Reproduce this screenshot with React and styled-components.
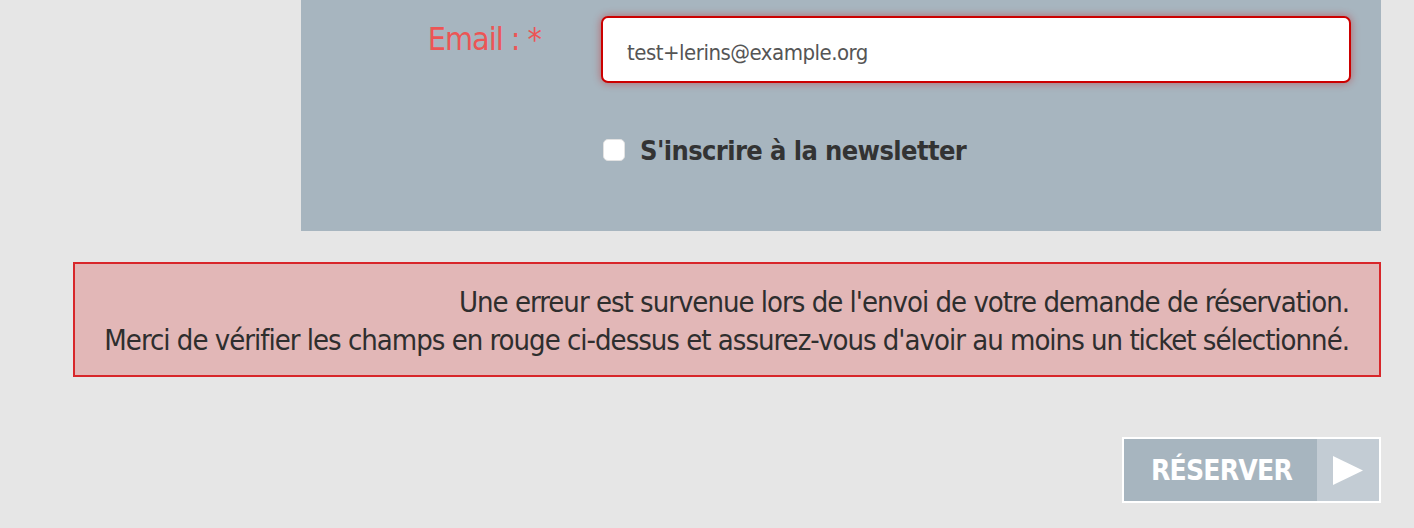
import React, { useState } from "react";
import styled, { createGlobalStyle } from "styled-components";

const GlobalStyle = createGlobalStyle`
  html, body {
    margin: 0;
    padding: 0;
    background: #e6e6e6;
    font-family: "DejaVu Sans Condensed", "Liberation Sans", sans-serif;
  }
`;

const Page = styled.div`
  width: 1414px;
  height: 528px;
  overflow: hidden;
  box-sizing: border-box;
  padding: 0 33px 0 73px;
  display: flex;
  flex-direction: column;
`;

const Panel = styled.div`
  margin-left: 228px;
  height: 231px;
  background: #a7b5bf;
  display: grid;
  grid-template-columns: 240px 750px;
  column-gap: 60px;
  grid-template-rows: 67px 30px;
  row-gap: 52px;
  align-content: start;
  padding-top: 16px;
  box-sizing: border-box;
`;

const Label = styled.label`
  text-align: right;
  color: ${(p) => (p.$error ? "#ec5555" : "#333")};
  font-size: 32px;
  letter-spacing: -1px;
  line-height: 1;
  padding-top: 7px;
`;

const Input = styled.input`
  box-sizing: border-box;
  width: 100%;
  height: 67px;
  border: 2px solid #cc0000;
  border-radius: 7px;
  box-shadow: 0 0 8px rgba(204, 0, 0, 0.45);
  background: #fff;
  padding: 5px 24px 0;
  font-family: inherit;
  font-size: 22px;
  letter-spacing: -0.5px;
  color: #555;
  outline: none;
`;

const CheckRow = styled.label`
  grid-column: 2;
  display: flex;
  align-items: center;
  gap: 15px;
  color: #333;
  font-size: 27px;
  letter-spacing: -0.6px;
  font-weight: 700;
  cursor: pointer;
`;

const Box = styled.span`
  width: 22px;
  height: 22px;
  box-sizing: border-box;
  border-radius: 5px;
  background: ${(p) => (p.$checked ? "#e9eef2" : "#fff")};
  border: 1px solid #e2e2e2;
  margin-left: 2px;
`;

const ErrorBox = styled.div`
  margin-top: 31px;
  box-sizing: border-box;
  height: 115px;
  border: 2px solid #d8262a;
  background: #e2b7b7;
  color: #2e2e2e;
  text-align: right;
  font-size: 29px;
  letter-spacing: -1px;
  line-height: 38px;
  padding: 19px 30px 0 10px;
  white-space: nowrap;
`;

const Actions = styled.div`
  margin-top: 60px;
  display: flex;
  justify-content: flex-end;
`;

const Button = styled.button`
  display: flex;
  height: 66px;
  padding: 0;
  border: 2px solid #fff;
  background: #a7b5bf;
  font-family: inherit;
  cursor: pointer;
`;

const ButtonText = styled.span`
  width: 193px;
  display: flex;
  align-items: center;
  justify-content: center;
  color: #fff;
  font-weight: 700;
  font-size: 28px;
  letter-spacing: -0.8px;
  text-transform: uppercase;
  padding-left: 2px;
  box-sizing: border-box;
`;

const ButtonArrow = styled.span`
  width: 62px;
  background: #c3ccd4;
  display: flex;
  align-items: center;
  justify-content: center;
`;

export default function App() {
  const [checked, setChecked] = useState(false);
  return (
    <>
      <GlobalStyle />
      <Page>
        <Panel>
          <Label $error htmlFor="email">Email : *</Label>
          <Input id="email" defaultValue="test+lerins@example.org" />
          <CheckRow onClick={() => setChecked(!checked)}>
            <Box $checked={checked} />
            S'inscrire à la newsletter
          </CheckRow>
        </Panel>
        <ErrorBox>
          Une erreur est survenue lors de l'envoi de votre demande de réservation.
          <br />
          Merci de vérifier les champs en rouge ci-dessus et assurez-vous d'avoir au moins un ticket sélectionné.
        </ErrorBox>
        <Actions>
          <Button>
            <ButtonText>Réserver</ButtonText>
            <ButtonArrow>
              <svg width="30" height="29" viewBox="0 0 30 29">
                <polygon points="0,0 30,14.5 0,29" fill="#fff" />
              </svg>
            </ButtonArrow>
          </Button>
        </Actions>
      </Page>
    </>
  );
}
